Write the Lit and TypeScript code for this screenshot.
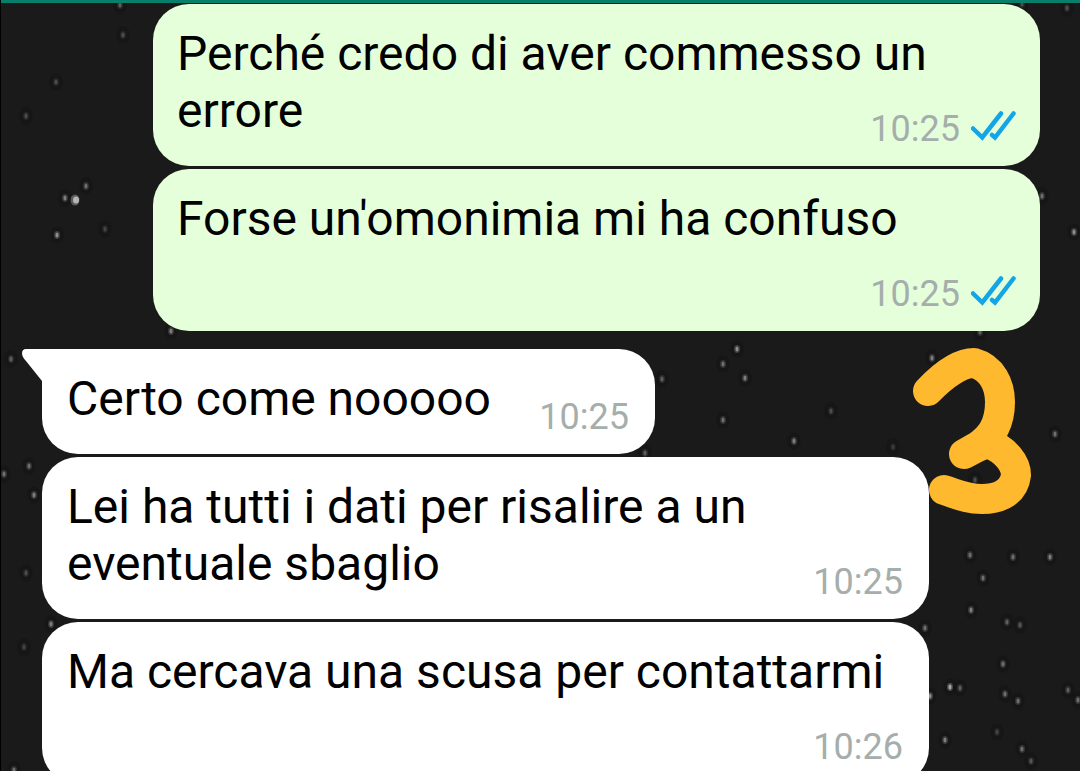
import { LitElement, html, svg, css } from "lit";
import { customElement, property } from "lit/decorators.js";

interface Message {
  text: string;
  time: string;
  sent: boolean;
  tail?: boolean;
}

const MESSAGES: Message[] = [
  { text: "Perché credo di aver commesso un errore", time: "10:25", sent: true },
  { text: "Forse un'omonimia mi ha confuso", time: "10:25", sent: true },
  { text: "Certo come nooooo", time: "10:25", sent: false, tail: true },
  { text: "Lei ha tutti i dati per risalire a un eventuale sbaglio", time: "10:25", sent: false },
  { text: "Ma cercava una scusa per contattarmi", time: "10:26", sent: false },
];

// Wallpaper stars: x, y, brightness
const STARS: [number, number, number][] = [
  [120, 5, 0.4], [123, 35, 0.3], [56, 82, 0.3], [26, 116, 0.3], [86, 186, 0.5],
  [65, 198, 0.6], [57, 235, 0.7], [105, 229, 0.25], [171, 331, 0.6],
  [1022, 4, 0.3], [1067, 8, 0.3], [1042, 196, 0.5], [1074, 232, 0.7], [980, 332, 0.4],
  [11, 359, 0.4], [29, 466, 0.5], [4, 474, 0.5], [34, 495, 0.6], [26, 573, 0.3],
  [51, 624, 0.6], [24, 647, 0.25], [14, 770, 0.5],
  [970, 555, 0.5], [1013, 557, 0.5], [1050, 557, 0.6], [983, 578, 0.5], [971, 610, 0.6],
  [1007, 622, 0.4], [1020, 625, 0.35], [925, 628, 0.5], [1003, 664, 0.5], [950, 687, 0.9],
  [960, 688, 0.4], [930, 696, 0.7], [1005, 694, 0.5], [1018, 701, 0.5], [1068, 690, 0.4],
  [1078, 700, 0.5], [997, 732, 0.25], [945, 740, 0.6], [1022, 749, 0.5], [1031, 761, 0.35],
  [737, 349, 0.7], [723, 364, 0.5], [745, 378, 0.6], [662, 379, 0.4], [723, 420, 0.5],
  [831, 411, 0.3], [794, 441, 0.6], [893, 447, 0.2], [645, 453, 0.4], [932, 358, 0.6],
  [1055, 434, 0.5], [975, 480, 0.3],
];

@customElement("chat-bubble")
export class ChatBubble extends LitElement {
  @property({ attribute: false }) message!: Message;

  static styles = css`
    :host {
      display: block;
      max-width: calc(100% - 111px);
    }
    .bubble {
      position: relative;
      display: grid;
      padding: 21px 26px 27px 25px;
      border-radius: 36px;
      background: #fff;
    }
    .sent {
      padding: 21px 24px 27px 24px;
      background: #e4ffda;
    }
    .with-tail {
      border-top-left-radius: 0;
    }
    .text {
      grid-area: 1 / 1;
      margin: 0;
      font-size: 48px;
      line-height: 57px;
      color: #000;
    }
    .room {
      display: inline-block;
      width: 138px;
      height: 1px;
    }
    .sent .room {
      width: 196px;
    }
    .meta {
      grid-area: 1 / 1;
      place-self: end;
      display: flex;
      align-items: center;
      gap: 11px;
      height: 42px;
      margin-bottom: -11px;
      font-size: 36px;
      line-height: 42px;
      color: #a5aeab;
    }
    .ticks {
      width: 45px;
      height: 30px;
      margin-bottom: 6px;
    }
    .tail {
      position: absolute;
      top: 0;
      right: 100%;
      width: 21px;
      height: 34px;
      margin-right: -1px;
    }
  `;

  render() {
    const { text, time, sent, tail } = this.message;
    return html`
      <article class="bubble ${sent ? "sent" : ""} ${tail ? "with-tail" : ""}">
        ${tail
          ? html`<svg class="tail" viewBox="0 0 21 34" aria-hidden="true">
              <path d="M21 0H4C0 0-1 4 1 8Q2 10 4 12L20 32L21 34Z" fill="#fff" />
            </svg>`
          : ""}
        <p class="text">${text}<span class="room"></span></p>
        <div class="meta">
          <time>${time}</time>
          ${sent
            ? html`<svg class="ticks" viewBox="0 0 45 30" role="img" aria-label="Letto">
                <path
                  d="M2 17.500L11.300 26.500L30 2.500M21 24L24 26.500L42.500 2.500"
                  fill="none"
                  stroke="#12a5e8"
                  stroke-width="4.500"
                  stroke-linecap="round"
                  stroke-linejoin="miter"
                />
              </svg>`
            : ""}
        </div>
      </article>
    `;
  }
}

@customElement("app-root")
export class AppRoot extends LitElement {
  static styles = css`
    :host {
      display: block;
      position: relative;
      box-sizing: border-box;
      height: 100vh;
      overflow: hidden;
      border-left: 1px solid #000;
      background: #1a1a1a;
      font-family: Roboto, "Noto Sans", sans-serif;
    }
    .toolbar-edge {
      position: relative;
      height: 3px;
      background: #087f6b;
    }
    .layer {
      position: absolute;
      top: 0;
      left: -1px;
      width: calc(100% + 1px);
      height: 100%;
      pointer-events: none;
    }
    .thread {
      position: relative;
      display: flex;
      flex-direction: column;
      gap: 18px;
      padding: 1px 40px 0 41px;
    }
    .group {
      display: flex;
      flex-direction: column;
      align-items: flex-start;
      gap: 3px;
    }
    .outgoing {
      align-items: flex-end;
    }
  `;

  private group(sent: boolean) {
    return html`<section class="group ${sent ? "outgoing" : ""}">
      ${MESSAGES.filter((m) => m.sent === sent).map(
        (m) => html`<chat-bubble .message=${m}></chat-bubble>`
      )}
    </section>`;
  }

  render() {
    return html`
      <svg
        class="layer"
        viewBox="0 0 1080 771"
        preserveAspectRatio="xMinYMin slice"
        aria-hidden="true"
      >
        ${STARS.map(
          ([x, y, o]) => svg`
            <ellipse cx=${x} cy=${y} rx="7" ry="9" fill="#000" opacity="0.12" />
            <ellipse cx=${x} cy=${y} rx="3" ry="4" fill="#fff" opacity=${o * 0.25} />
            <ellipse cx=${x} cy=${y} rx="1.500" ry="2.500" fill="#ddd" opacity=${o * 0.7} />`
        )}
        <ellipse cx="75" cy="200" rx="4.500" ry="5.500" fill="#bbb" opacity="0.4" />
        <ellipse cx="76" cy="200" rx="3" ry="3.500" fill="#ccc" opacity="0.8" />
      </svg>
      <div class="toolbar-edge"></div>
      <main class="thread">${this.group(true)}${this.group(false)}</main>
      <svg
        class="layer"
        viewBox="0 0 1080 771"
        preserveAspectRatio="xMaxYMin meet"
        aria-hidden="true"
      >
        <path
          d="M928 391C944 374 961 363 974 363C992 368 1000 385 1000 402C1000 425 991 437 978 446L964 454C975 449 981 443 990 444C1005 450 1016 463 1016 475C1014 492 1000 499 982 499C966 499 957 494 944 490"
          fill="none"
          stroke="#ffb92f"
          stroke-width="30"
          stroke-linecap="round"
          stroke-linejoin="round"
        />
      </svg>
    `;
  }
}
